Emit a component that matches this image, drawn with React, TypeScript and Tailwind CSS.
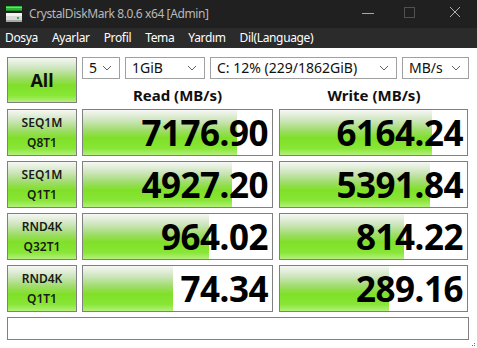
import React from "react";

const grad =
  "linear-gradient(to bottom, #f6f7f4 0%, #cfe6c0 22%, #9edc68 46%, #80e028 62%, #88e636 85%, #b4f07c 100%)";

function Chevron() {
  return (
    <svg width="10" height="6" viewBox="0 0 10 6" className="shrink-0">
      <polyline points="1,1 5,5 9,1" fill="none" stroke="#606060" strokeWidth="1" />
    </svg>
  );
}

function Select({ w, text }: { w: string; text: string }) {
  return (
    <div
      className={`${w} h-[22px] border border-[#a0a0a0] bg-white flex items-center justify-between pl-[6px] pr-[7px] text-[14px] text-[#101010]`}
    >
      <span className="leading-none">{text}</span>
      <Chevron />
    </div>
  );
}

function Label({ a, b }: { a: string; b: string }) {
  return (
    <div
      className="h-[47px] border border-[#808080] flex flex-col items-center justify-center text-[12px] leading-[20px] font-semibold text-[#1a1a1a]"
      style={{ background: grad }}
    >
      <span>{a}</span>
      <span>{b}</span>
    </div>
  );
}

function Value({ v, fill }: { v: string; fill: number }) {
  return (
    <div className="relative h-[47px] border border-[#808080] bg-white overflow-hidden">
      <div className="absolute left-0 top-0 bottom-0" style={{ width: fill, background: grad }} />
      <div className="relative h-full flex items-center justify-end pr-[4px] text-[35px] font-bold text-black leading-none tracking-[-0.5px]">
        {v}
      </div>
    </div>
  );
}

export default function App() {
  const rows = [
    { a: "SEQ1M", b: "Q8T1", r: "7176.90", rf: 154, w: "6164.24", wf: 152 },
    { a: "SEQ1M", b: "Q1T1", r: "4927.20", rf: 149, w: "5391.84", wf: 150 },
    { a: "RND4K", b: "Q32T1", r: "964.02", rf: 126, w: "814.22", wf: 124 },
    { a: "RND4K", b: "Q1T1", r: "74.34", rf: 90, w: "289.16", wf: 109 },
  ];
  return (
    <div
      className="w-[477px] h-[348px] bg-white overflow-hidden relative"
      style={{ fontFamily: '"Noto Sans", "Open Sans", sans-serif' }}
    >
      {/* title bar */}
      <div className="h-[28px] bg-[#202020] flex items-center relative">
        <svg width="18" height="18" viewBox="0 0 18 18" className="ml-[5px]">
          <rect x="1" y="1" width="16" height="5" fill="#2fb53a" />
          <rect x="1" y="2" width="16" height="1" fill="#6fe06a" />
          <rect x="1" y="5" width="16" height="1" fill="#1f8a2a" />
          <rect x="1" y="8" width="16" height="9" fill="#d8d8d8" />
          <rect x="1" y="8" width="16" height="3" fill="#f2f2f2" />
          <rect x="1" y="15" width="16" height="2" fill="#a8a8a8" />
          <rect x="12" y="12" width="2" height="2" fill="#22c030" />
        </svg>
        <span className="ml-[6px] text-[12px] text-[#b8b8b8] tracking-[-0.4px]">
          CrystalDiskMark 8.0.6 x64 [Admin]
        </span>
        <div className="absolute left-[362px] top-[13px] w-[12px] h-[1px] bg-[#a8a8a8]" />
        <div className="absolute left-[404px] top-[7px] w-[11px] h-[11px] border border-[#505050]" />
        <svg width="12" height="12" viewBox="0 0 12 12" className="absolute left-[449px] top-[6px]">
          <line x1="1" y1="1" x2="11" y2="11" stroke="#b0b0b0" strokeWidth="1" />
          <line x1="11" y1="1" x2="1" y2="11" stroke="#b0b0b0" strokeWidth="1" />
        </svg>
      </div>
      {/* menu bar */}
      <div className="h-[20px] bg-[#2b2b2b] flex items-center text-[12px] text-white pl-[5px] gap-[14px] tracking-[-0.35px]">
        <span>Dosya</span>
        <span>Ayarlar</span>
        <span>Profil</span>
        <span>Tema</span>
        <span>Yardım</span>
        <span>Dil(Language)</span>
      </div>
      {/* content */}
      <div className="pt-[9px] pl-[7px] pr-[8px] flex flex-col gap-[5px]">
        <div className="flex gap-[5px]">
          <div
            className="w-[70px] h-[46px] border border-[#808080] flex items-center justify-center text-[18px] font-bold text-[#101010]"
            style={{ background: grad }}
          >
            All
          </div>
          <div className="flex-1 flex flex-col">
            <div className="flex gap-[5px]">
              <Select w="w-[38px]" text="5" />
              <Select w="w-[80px]" text="1GiB" />
              <Select w="w-[187px]" text="C: 12% (229/1862GiB)" />
              <Select w="w-[67px]" text="MB/s" />
            </div>
            <div className="flex mt-[7px] leading-[18px] text-[15px] font-bold text-[#101010]">
              <div className="w-[191px] text-center">Read (MB/s)</div>
              <div className="w-[6px]" />
              <div className="w-[190px] text-center">Write (MB/s)</div>
            </div>
          </div>
        </div>
        {rows.map((r, i) => (
          <div key={i} className="grid grid-cols-[70px_191px_190px] gap-x-[5px]">
            <Label a={r.a} b={r.b} />
            <Value v={r.r} fill={r.rf} />
            <div className="ml-[1px]">
              <Value v={r.w} fill={r.wf} />
            </div>
          </div>
        ))}
        <div className="h-[23px] border border-[#808080] bg-white w-[462px]" />
      </div>
      <svg width="4" height="4" viewBox="0 0 4 4" className="absolute right-[1px] bottom-[1px]">
        <rect x="2" y="0" width="1" height="1" fill="#707070" />
        <rect x="0" y="2" width="1" height="1" fill="#707070" />
        <rect x="2" y="2" width="1" height="1" fill="#707070" />
      </svg>
    </div>
  );
}
